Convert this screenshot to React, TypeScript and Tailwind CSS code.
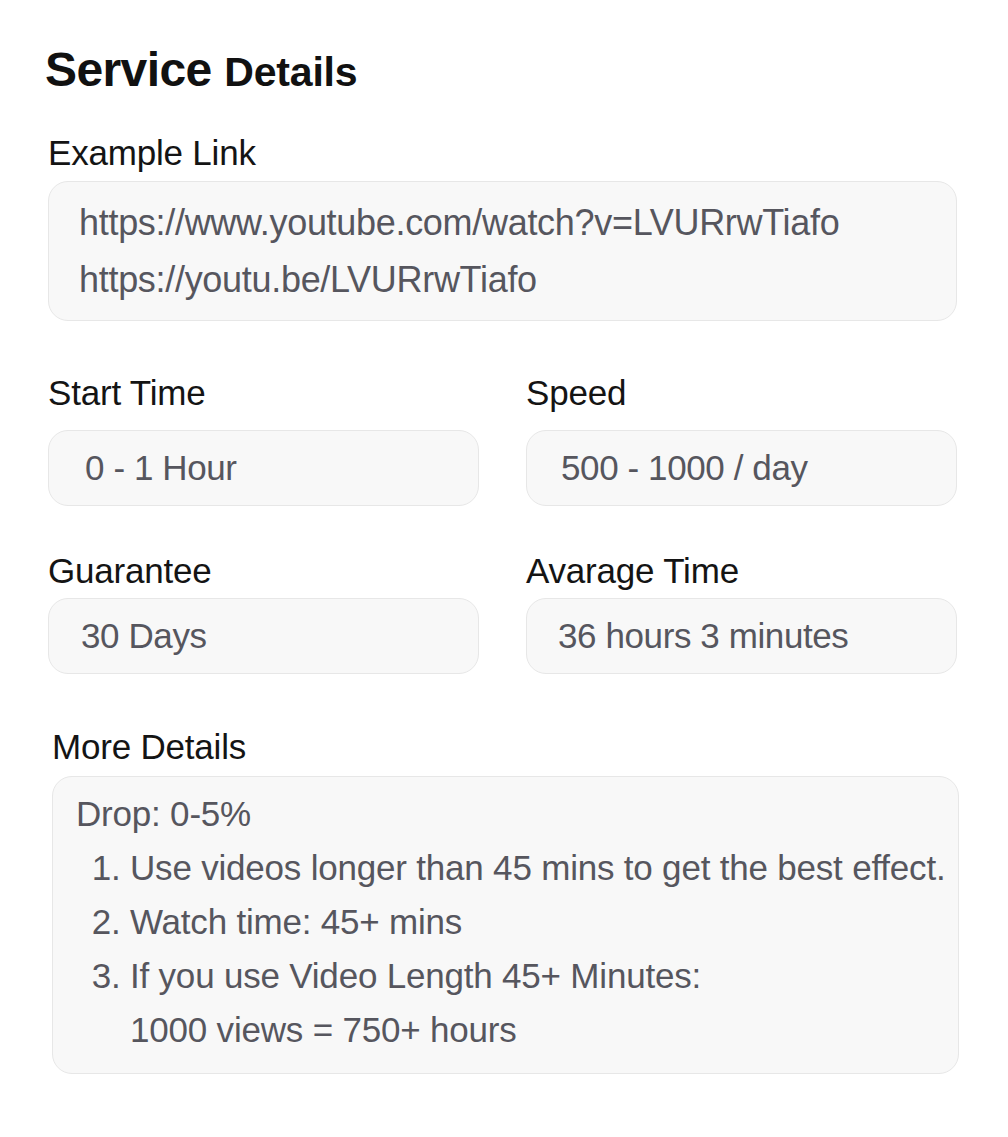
const sans = "font-['Liberation_Sans','Helvetica_Neue',Arial,sans-serif]";

const box = "rounded-[20px] border border-[#e7e7e7] bg-[#f8f8f8] text-[#56565e]";
const label = "text-[35px] leading-[40px] tracking-[-0.2px] text-[#141414]";

function Field({ title, value, gap, indent }: { title: string; value: string; gap: string; indent: string }) {
  return (
    <div>
      <div className={label}>{title}</div>
      <div className={`${gap} ${box} ${indent} flex h-[76px] items-center text-[35px] tracking-[-0.4px]`}>
        {value}
      </div>
    </div>
  );
}

export default function App() {
  return (
    <div className={`${sans} min-h-screen bg-white pl-[48px] pr-[51px] pt-[42px]`}>
      <h1 className="-ml-[3px] text-[48px] font-bold leading-[56px] tracking-[-0.6px] text-[#111]">
        Service <span className="text-[41px] tracking-[-0.2px]">Details</span>
      </h1>

      <div className={`mt-[33px] ${label}`}>Example Link</div>
      <div className={`mt-[8px] ${box} py-[12px] pl-[30px] text-[36px] leading-[57px] tracking-[-0.3px]`}>
        <div>https://www.youtube.com/watch?v=LVURrwTiafo</div>
        <div>https://youtu.be/LVURrwTiafo</div>
      </div>

      <div className="mt-[52px] grid grid-cols-2 gap-x-[47px]">
        <Field title="Start Time" value="0 - 1 Hour" gap="mt-[17px]" indent="pl-[36px]" />
        <Field title="Speed" value="500 - 1000 / day" gap="mt-[17px]" indent="pl-[34px]" />
      </div>

      <div className="mt-[45px] grid grid-cols-2 gap-x-[47px]">
        <Field title="Guarantee" value="30 Days" gap="mt-[7px]" indent="pl-[32px]" />
        <Field title="Avarage Time" value="36 hours 3 minutes" gap="mt-[7px]" indent="pl-[31px]" />
      </div>

      <div className="-mr-[2px] ml-[4px] mt-[53px]">
        <div className={label}>More Details</div>
        <div
          className={`mt-[9px] ${box} pb-[16px] pl-[23px] pr-[10px] pt-[10px] text-[35px] leading-[54px] tracking-[-0.2px]`}
        >
          <div>Drop: 0-5%</div>
          <ol className="list-decimal pl-[54px]">
            <li>Use videos longer than 45 mins to get the best effect.</li>
            <li>Watch time: 45+ mins</li>
            <li>
              If you use Video Length 45+ Minutes:
              <br />
              1000 views = 750+ hours
            </li>
          </ol>
        </div>
      </div>
    </div>
  );
}
